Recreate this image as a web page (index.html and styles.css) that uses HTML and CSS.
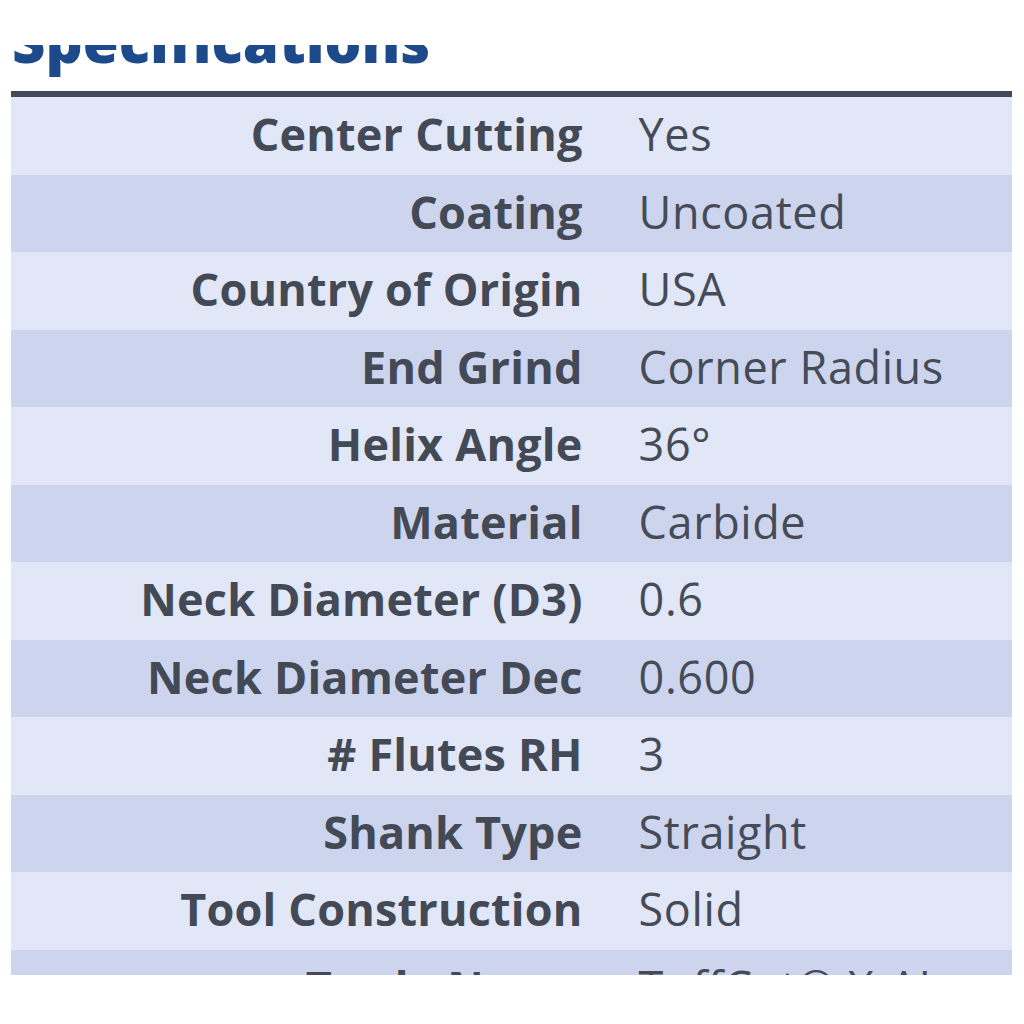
FILE: index.html
```html
<!DOCTYPE html>
<html>
<head>
<meta charset="utf-8">
<link rel="stylesheet" href="styles.css">
</head>
<body>
<div class="page">
  <div class="head-clip">
    <h2 class="title">Specifications</h2>
  </div>
  <div class="clip">
    <table class="specs">
      <tbody>
        <tr><th>Center Cutting</th><td>Yes</td></tr>
        <tr><th>Coating</th><td>Uncoated</td></tr>
        <tr><th>Country of Origin</th><td>USA</td></tr>
        <tr><th>End Grind</th><td>Corner Radius</td></tr>
        <tr><th>Helix Angle</th><td>36°</td></tr>
        <tr><th>Material</th><td>Carbide</td></tr>
        <tr><th>Neck Diameter (D3)</th><td>0.6</td></tr>
        <tr><th>Neck Diameter Dec</th><td>0.600</td></tr>
        <tr><th># Flutes RH</th><td>3</td></tr>
        <tr><th>Shank Type</th><td>Straight</td></tr>
        <tr><th>Tool Construction</th><td>Solid</td></tr>
        <tr><th>Trade Name</th><td>TuffCut® X-AL</td></tr>
        <tr><th>Unit of Measure</th><td>Metric</td></tr>
      </tbody>
    </table>
  </div>
</div>
</body>
</html>
```
FILE: styles.css
```css
html, body {
  margin: 0;
  padding: 0;
  background: #ffffff;
}
.page {
  padding: 0 12px 0 11px;
  font-family: "Open Sans", Lato, sans-serif;
}
.head-clip {
  margin-top: 45px;
  height: 46px;
  overflow: hidden;
}
.title {
  margin: -34px 0 0 1px;
  font-size: 58px;
  line-height: 60px;
  font-weight: 800;
  color: #1d4a8a;
}
.clip {
  height: 884px;
  overflow: hidden;
}
.specs {
  width: 100%;
  border-collapse: separate;
  border-spacing: 0;
  border-top: 6px solid #434a57;
}
.specs tr {
  height: 77.5px;
  background: #e1e7f7;
}
.specs tr:nth-child(even) {
  background: #cdd5ee;
}
.specs th,
.specs td {
  padding-top: 0;
  padding-bottom: 4px;
  white-space: nowrap;
}
.specs th {
  width: 60%;
  box-sizing: border-box;
  text-align: right;
  padding-right: 29px;
  padding-left: 0;
  font-size: 45px;
  letter-spacing: 0.2px;
  font-weight: 700;
  color: #434a56;
}
.specs td {
  padding-left: 27px;
  padding-right: 0;
  font-size: 45px;
  letter-spacing: 0.6px;
  font-weight: 400;
  color: #454c58;
}
```
